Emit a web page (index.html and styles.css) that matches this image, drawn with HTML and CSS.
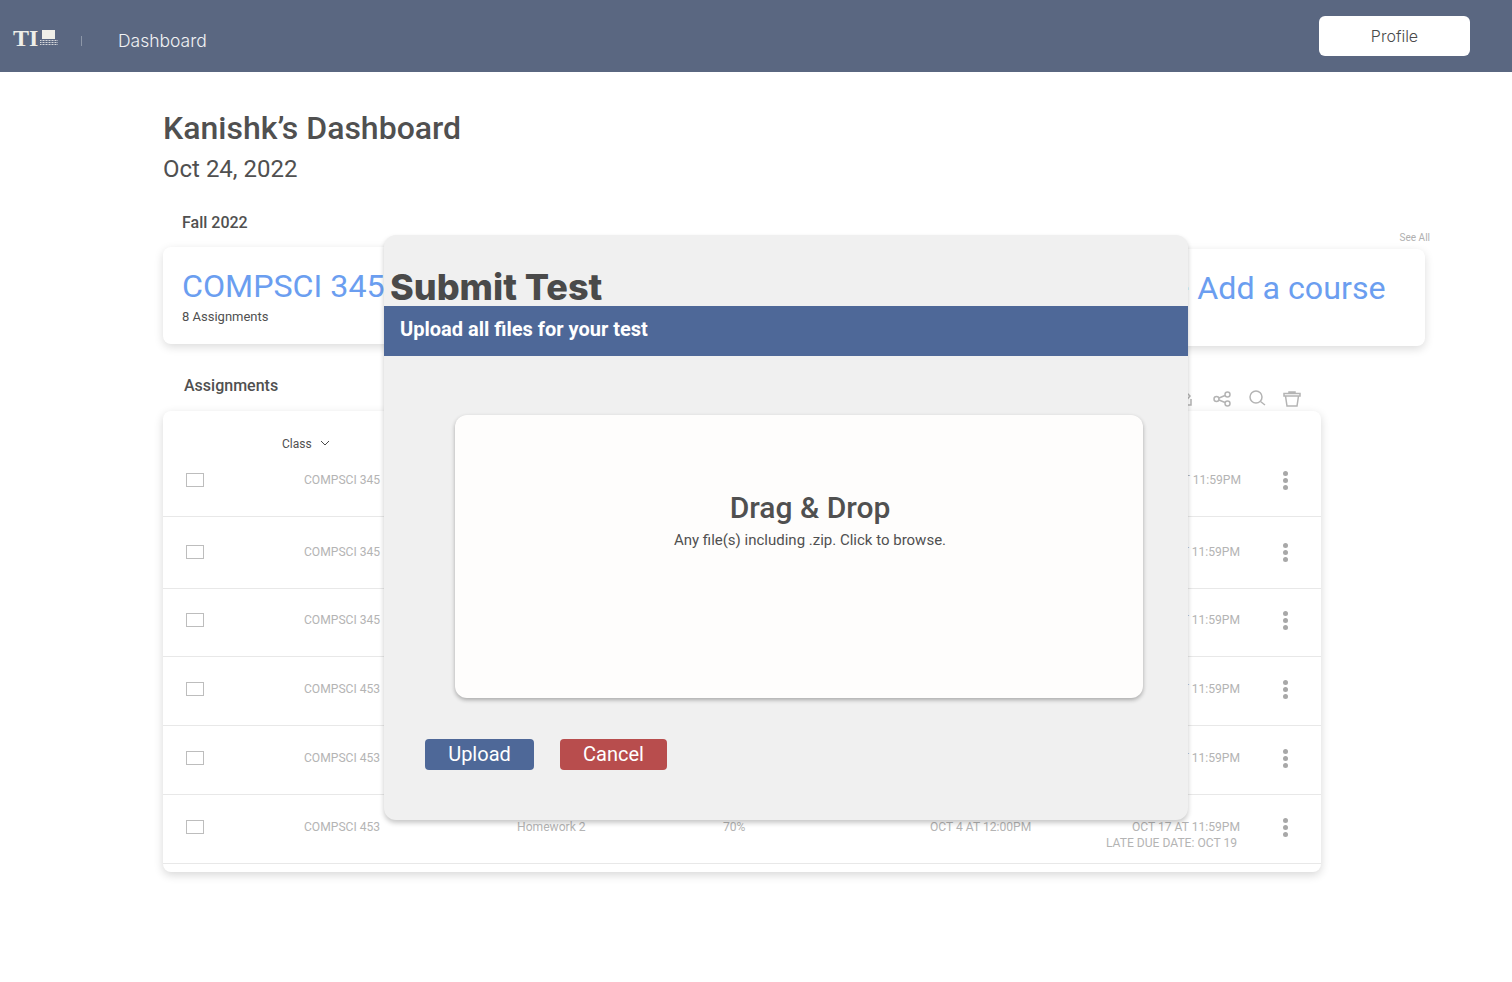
FILE: index.html
```html
<!DOCTYPE html>
<html lang="en">
<head>
    <meta charset="UTF-8">
    <meta name="viewport" content="width=device-width, initial-scale=1.0">
    <title>Kanishk's Dashboard</title>
    <link rel="stylesheet" href="styles.css">
</head>
<body>
    <header class="topbar">
        <div class="logo">
            <span class="logo-text">TI</span>
            <svg class="logo-laptop" width="18" height="16" viewBox="0 0 18 16">
                <rect x="2" y="0" width="13" height="9" fill="#efeee8"/>
                <path d="M0 10.5h18M0 12.5h18M0 14.5h18" stroke="#d5d7da" stroke-width="1" stroke-dasharray="1 0.5" fill="none"/>
            </svg>
        </div>
        <span class="topbar-sep"></span>
        <a class="topbar-link">Dashboard</a>
        <button class="profile-btn">Profile</button>
    </header>

    <main class="content">
        <h1 class="page-title">Kanishk’s Dashboard</h1>
        <div class="page-date">Oct 24, 2022</div>

        <h2 class="term">Fall 2022</h2>
        <div class="see-all">See All</div>
        <div class="courses">
            <div class="course-card">
                <div class="course-name">COMPSCI 345</div>
                <div class="course-count">8 Assignments</div>
            </div>
            <div class="course-card add-card">
                <div class="course-name">+ Add a course</div>
            </div>
        </div>

        <div class="assign-head">
            <h2 class="assign-title">Assignments</h2>
            <div class="tools">
                <svg width="20" height="20" viewBox="0 0 20 20"><path d="M3 12 L10 4 L13 7 L6 15 M9 16 H14 V10"/></svg>
                <svg width="20" height="20" viewBox="0 0 20 20"><circle cx="4.5" cy="10" r="2.5"/><circle cx="15.5" cy="5.5" r="2.5"/><circle cx="15.5" cy="14.5" r="2.5"/><path d="M7 9 L13 6.5 M7 11 L13 13.5"/></svg>
                <svg width="20" height="20" viewBox="0 0 20 20"><circle cx="9" cy="8" r="6"/><path d="M13.5 12.5 L18 16"/></svg>
                <svg width="20" height="20" viewBox="0 0 20 20"><path d="M2 4.5 H18 V7 H2 Z M7 4.5 V3 H13 V4.5 M3.5 7 L5 17 H15 L16.5 7"/></svg>
            </div>
        </div>

        <div class="table-card">
            <div class="table-head">
                <span class="sort">Class
                    <svg width="10" height="6" viewBox="0 0 10 6"><path d="M1 1 L5 5 L9 1"/></svg>
                </span>
            </div>
            <div class="row row-first">
                <span class="check"></span>
                <span class="cell">COMPSCI 345</span>
                <span class="cell"></span>
                <span class="cell"></span>
                <span class="cell"></span>
                <div class="cell cell-due cell-due-first">OCT 24 AT 11:59PM</div>
                <span></span>
                <span class="dots"><i></i><i></i><i></i></span>
            </div>
            <div class="row row-second">
                <span class="check"></span>
                <span class="cell">COMPSCI 345</span>
                <span class="cell"></span>
                <span class="cell"></span>
                <span class="cell"></span>
                <div class="cell cell-due">OCT 17 AT 11:59PM</div>
                <span></span>
                <span class="dots"><i></i><i></i><i></i></span>
            </div>
            <div class="row row-third">
                <span class="check"></span>
                <span class="cell">COMPSCI 345</span>
                <span class="cell"></span>
                <span class="cell"></span>
                <span class="cell"></span>
                <div class="cell cell-due">OCT 17 AT 11:59PM</div>
                <span></span>
                <span class="dots"><i></i><i></i><i></i></span>
            </div>
            <div class="row">
                <span class="check"></span>
                <span class="cell">COMPSCI 453</span>
                <span class="cell"></span>
                <span class="cell"></span>
                <span class="cell"></span>
                <div class="cell cell-due">OCT 17 AT 11:59PM</div>
                <span></span>
                <span class="dots"><i></i><i></i><i></i></span>
            </div>
            <div class="row">
                <span class="check"></span>
                <span class="cell">COMPSCI 453</span>
                <span class="cell"></span>
                <span class="cell"></span>
                <span class="cell"></span>
                <div class="cell cell-due">OCT 17 AT 11:59PM</div>
                <span></span>
                <span class="dots"><i></i><i></i><i></i></span>
            </div>
            <div class="row">
                <span class="check"></span>
                <span class="cell">COMPSCI 453</span>
                <span class="cell">Homework 2</span>
                <span class="cell">70%</span>
                <span class="cell">OCT 4 AT 12:00PM</span>
                <div class="cell cell-due">OCT 17 AT 11:59PM<small>LATE DUE DATE: OCT 19</small></div>
                <span></span>
                <span class="dots"><i></i><i></i><i></i></span>
            </div>
        </div>
    </main>

    <div class="modal">
        <h2 class="modal-title">Submit Test</h2>
        <div class="modal-banner">Upload all files for your test</div>
        <div class="dropzone">
            <div class="drop-title">Drag &amp; Drop</div>
            <div class="drop-sub">Any file(s) including .zip. Click to browse.</div>
        </div>
        <div class="modal-actions">
            <button class="btn btn-upload">Upload</button>
            <button class="btn btn-cancel">Cancel</button>
        </div>
    </div>
</body>
</html>
```

FILE: styles.css
```css
* {
    box-sizing: border-box;
}
body {
    margin: 0;
    background-color: white;
    color: #505050;
    font-family: Roboto, sans-serif;
    height: 982px;
    overflow: hidden;
    position: relative;
}
.topbar {
    height: 72px;
    background-color: #5a6781;
    display: flex;
    align-items: center;
    padding: 0 42px 0 13px;
}
.logo {
    display: flex;
    align-items: center;
    width: 68px;
    height: 24px;
    margin-top: 4px;
}
.logo-text {
    font-family: "Liberation Serif", serif;
    font-weight: bold;
    font-size: 24px;
    line-height: 24px;
    color: #efeee8;
}
.logo-laptop {
    margin-left: 2px;
}
.topbar-sep {
    width: 1px;
    height: 10px;
    margin-top: 10px;
    background-color: #8d97a8;
}
.topbar-link {
    margin-left: 36px;
    margin-top: 8px;
    color: #f1f2f4;
    font-family: Inter, sans-serif;
    font-weight: 300;
    font-size: 17.5px;
}
.profile-btn {
    margin-left: auto;
    width: 151px;
    height: 40px;
    background-color: white;
    border: none;
    border-radius: 6px;
    color: #4a4a4a;
    font-family: Inter, sans-serif;
    font-weight: 300;
    font-size: 16px;
}
.content {
    padding: 36px 0 0 163px;
    width: 1425px;
}
.page-title {
    margin: 0;
    font-size: 32px;
    line-height: 40px;
    font-weight: 500;
}
.page-date {
    font-size: 24px;
    line-height: 28px;
    margin-top: 7px;
}
.term {
    margin: 30px 0 0 19px;
    font-size: 16px;
    line-height: 20px;
    font-weight: 500;
}
.see-all {
    text-align: right;
    margin: -1px -5px 0 0;
    font-size: 10px;
    line-height: 12px;
    color: #b0b0b0;
}
.courses {
    display: flex;
    justify-content: space-between;
    align-items: flex-start;
    margin-top: 3px;
}
.course-card {
    width: 400px;
    height: 97px;
    padding: 20px 19px;
    background-color: white;
    border-radius: 8px;
    box-shadow: 0 3px 10px rgba(0, 0, 0, 0.14);
}
.add-card {
    width: 500px;
    margin-top: 2px;
    padding-left: 246px;
    padding-right: 0;
    white-space: nowrap;
}
.course-name {
    font-size: 32.2px;
    line-height: 38px;
    color: #6b9ef0;
}
.course-count {
    font-size: 13px;
    line-height: 16px;
    margin-top: 4px;
}
.assign-head {
    display: flex;
    justify-content: space-between;
    width: 1158px;
    height: 65px;
    padding: 30px 0 0 21px;
}
.assign-title {
    margin: 0;
    font-size: 16px;
    line-height: 20px;
    font-weight: 500;
}
.tools {
    display: flex;
    gap: 15px;
    margin: 13px 19px 0 0;
}
.tools svg {
    fill: none;
    stroke: #b4b4b4;
    stroke-width: 1.5;
}
.table-card {
    width: 1158px;
    height: 461px;
    background-color: white;
    border-radius: 8px;
    box-shadow: 0 3px 10px rgba(0, 0, 0, 0.16);
}
.table-head {
    height: 48px;
    padding: 25px 0 0 119px;
}
.sort {
    display: flex;
    align-items: center;
    gap: 8px;
    font-size: 12px;
    line-height: 16px;
}
.sort svg {
    fill: none;
    stroke: #4a4a4a;
    stroke-width: 1;
    margin-bottom: 3px;
}
.row {
    display: grid;
    grid-template-columns: 118px 213px 206px 207px 130px 180px 42px 6px;
    height: 69px;
    padding: 24px 0 0 23px;
    border-bottom: 1px solid #e8e8e8;
}
.row-first {
    height: 58px;
    padding-top: 13px;
}
.row-second {
    height: 72px;
    padding-top: 27px;
}
.row-third {
    height: 68px;
    padding-top: 23px;
}
.check {
    width: 18px;
    height: 14px;
    margin-top: 1px;
    border: 1px solid #bdbdbd;
}
.cell {
    font-size: 12.1px;
    line-height: 16px;
    color: #b4b4b4;
    white-space: nowrap;
}
.cell-due {
    text-align: right;
}
.cell-due-first {
    margin-right: -1px;
}
.cell-due small {
    display: block;
    font-size: 12.1px;
    margin-right: 3px;
}
.dots {
    display: flex;
    flex-direction: column;
    align-items: center;
    gap: 2px;
    margin-top: -1px;
}
.dots i {
    width: 5px;
    height: 5px;
    border-radius: 50%;
    background-color: #a8a8a8;
}
.modal {
    position: absolute;
    left: 384px;
    top: 235px;
    width: 804px;
    height: 585px;
    background-color: #f0f0f0;
    border-radius: 12px;
    box-shadow: 0 3px 5px rgba(0, 0, 0, 0.22);
    display: flex;
    flex-direction: column;
}
.modal-title {
    margin: 30px 0 0 6px;
    height: 41px;
    font-family: Inter, sans-serif;
    font-weight: 800;
    font-size: 36px;
    line-height: 44px;
    color: #4a4a4a;
}
.modal-banner {
    height: 50px;
    padding-left: 16px;
    background-color: #4e6898;
    color: white;
    font-size: 20px;
    line-height: 47px;
    font-weight: 700;
}
.dropzone {
    width: 688px;
    height: 283px;
    margin: 59px 0 0 71px;
    padding: 73px 22px 0 44px;
    background-color: #fefdfc;
    border-radius: 12px;
    box-shadow: 0 2px 4px rgba(0, 0, 0, 0.3);
    text-align: center;
}
.drop-title {
    font-size: 30px;
    line-height: 40px;
    font-weight: 500;
}
.drop-sub {
    font-size: 15px;
    line-height: 20px;
    margin-top: 2px;
}
.modal-actions {
    display: flex;
    gap: 26px;
    margin: 41px 0 0 41px;
}
.btn {
    height: 31px;
    padding-bottom: 2px;
    border: none;
    border-radius: 4px;
    color: white;
    font-family: Roboto, sans-serif;
    font-size: 20px;
}
.btn-upload {
    width: 109px;
    background-color: #4e6898;
}
.btn-cancel {
    width: 107px;
    background-color: #b84d4d;
}
```
